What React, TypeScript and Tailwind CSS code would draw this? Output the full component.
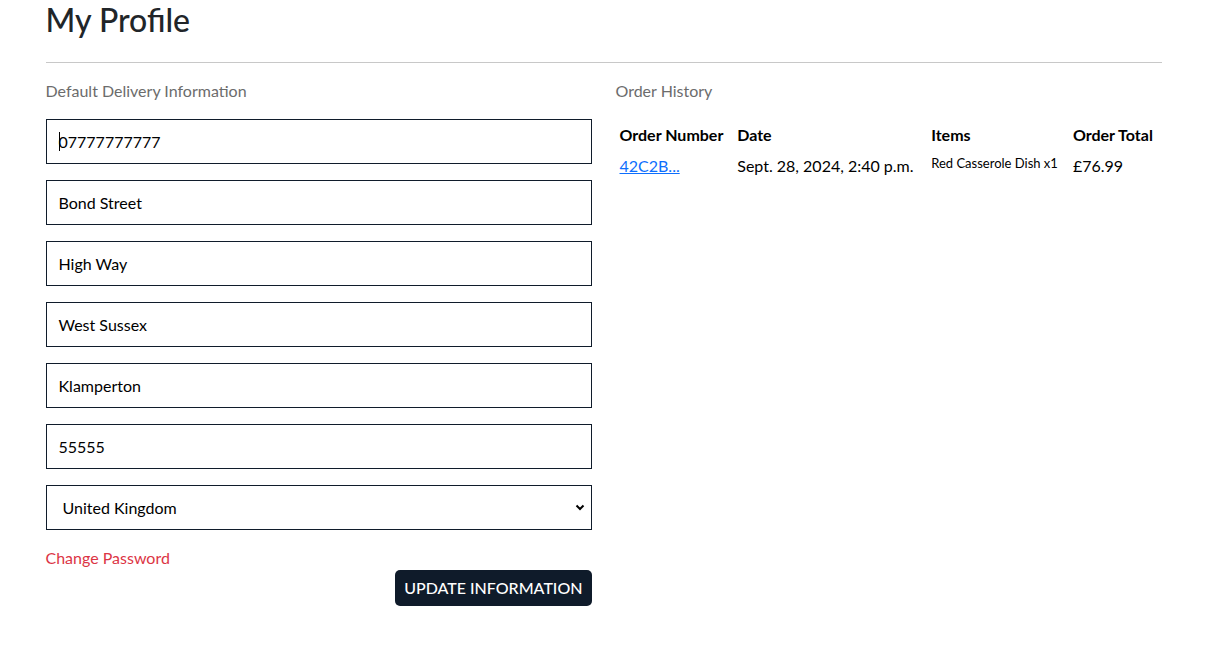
import React from "react";

const font = { fontFamily: "Lato, 'Noto Sans', sans-serif" };

export default function App() {
  const fields = ["07777777777", "Bond Street", "High Way", "West Sussex", "Klamperton", "55555"];
  return (
    <div className="min-h-[657px] bg-white text-[#212529]" style={font}>
      <div className="mx-auto w-[1140px] px-3">
        <h1 className="text-[32px] font-medium leading-[40px] text-[#212529]">My Profile</h1>
        <hr className="mt-[22px] border-t border-[#c8c8c8]" />
        <div className="flex -mx-3">
          <div className="w-1/2 px-3">
            <p className="mt-[16px] text-[16px] leading-[24px] text-[#6c6c6c]">Default Delivery Information</p>
            <div className="mt-[16px] flex flex-col gap-4">
              {fields.map((f, i) => (
                <div key={i} className="h-[45px] border border-[#101c2b] flex items-center px-3 text-[16px] text-black">
                  {i === 0 ? <span className="inline-block w-px h-[19px] bg-black mr-[-1px]" /> : null}
                  {f}
                </div>
              ))}
              <div className="h-[45px] border border-[#101c2b] flex items-center justify-between pl-4 pr-[6px] text-[16px] text-black">
                <span>United Kingdom</span>
                <svg width="10" height="7" viewBox="0 0 10 7"><path d="M1.5 1.5 L5 5 L8.5 1.5" stroke="black" strokeWidth="2" fill="none" /></svg>
              </div>
            </div>
            <p className="mt-[17px] text-[16px] leading-[22px] text-[#dc3545]">Change Password</p>
            <div className="flex justify-end mt-[1px]">
              <button className="h-[36px] px-[9px] rounded-[5px] bg-[#0f1b2a] text-white text-[16px] font-medium uppercase">Update Information</button>
            </div>
          </div>
          <div className="w-1/2 px-3">
            <p className="mt-[16px] text-[16px] leading-[24px] text-[#6c6c6c]">Order History</p>
            <table className="mt-[15px] w-full text-[16px] text-black">
              <thead>
                <tr className="font-bold">
                  <th className="text-left px-1 py-[5px] whitespace-nowrap">Order Number</th>
                  <th className="text-left px-1 py-[5px]">Date</th>
                  <th className="text-left px-1 py-[5px]">Items</th>
                  <th className="text-left px-1 py-[5px] whitespace-nowrap">Order Total</th>
                </tr>
              </thead>
              <tbody>
                <tr className="align-top">
                  <td className="px-1 py-[2px]"><a className="text-[#0d6efd] underline">42C2B...</a></td>
                  <td className="px-1 py-[2px] whitespace-nowrap">Sept. 28, 2024, 2:40 p.m.</td>
                  <td className="px-1 py-[2px] text-[13px] whitespace-nowrap">Red Casserole Dish x1</td>
                  <td className="px-1 py-[2px]">£76.99</td>
                </tr>
              </tbody>
            </table>
          </div>
        </div>
      </div>
    </div>
  );
}
